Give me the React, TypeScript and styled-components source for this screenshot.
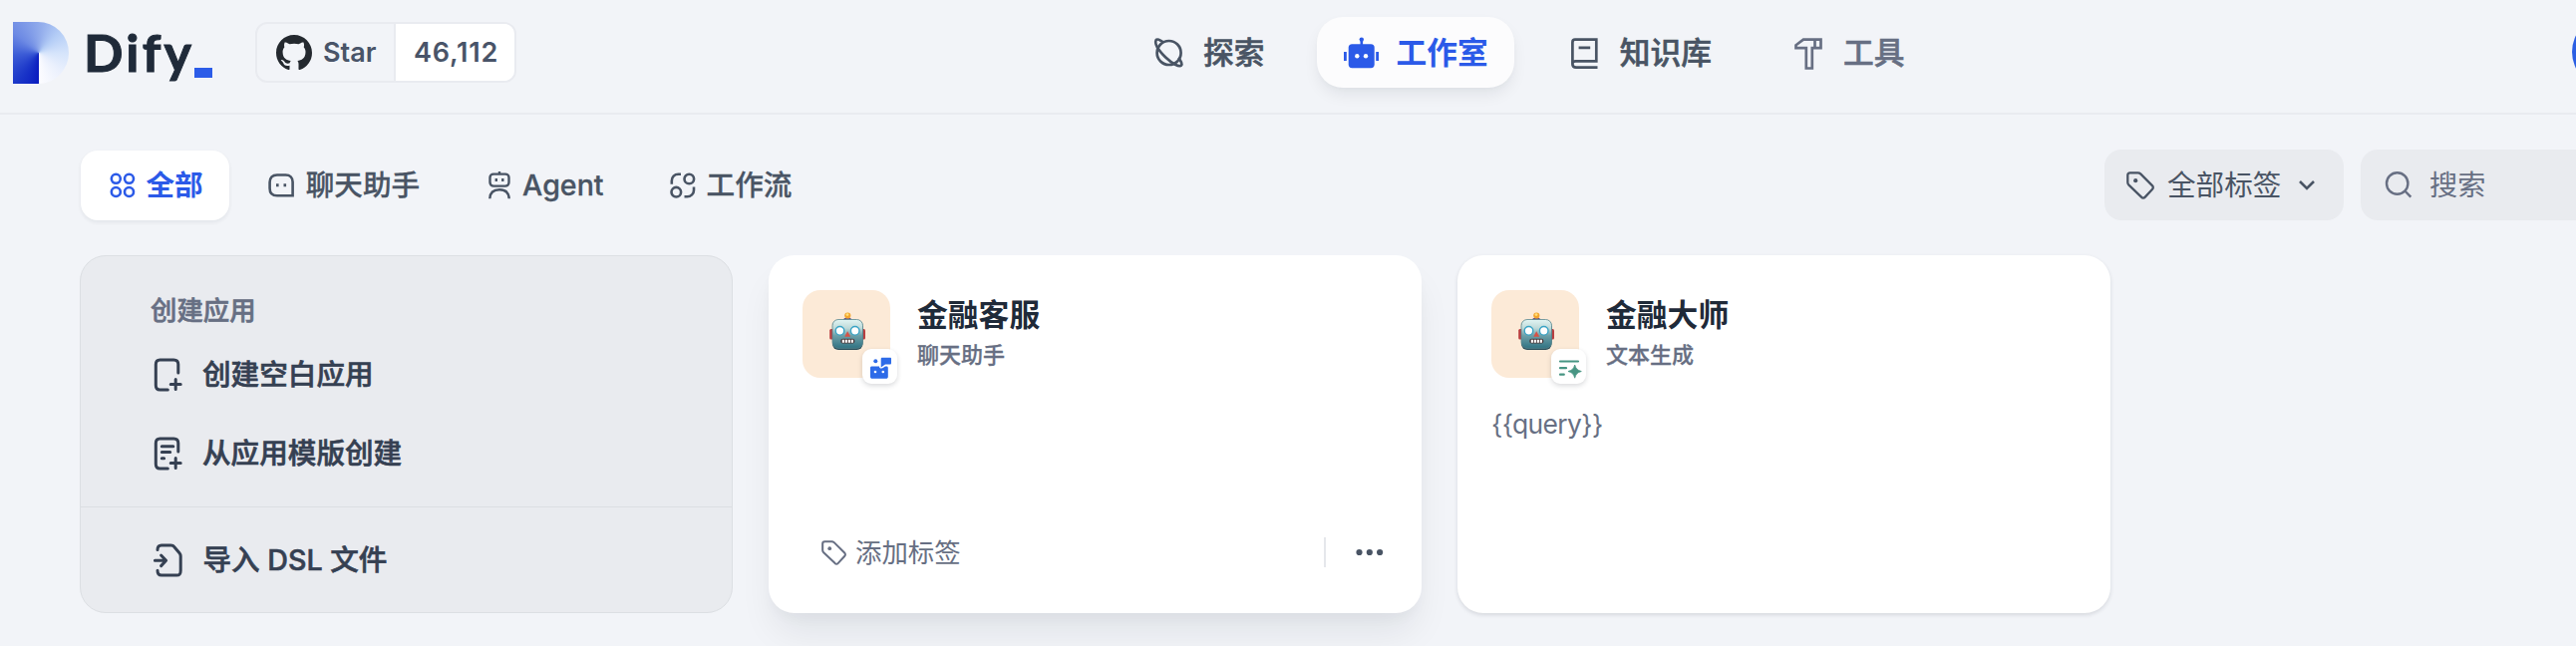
import React from "react";
import styled, { createGlobalStyle, css } from "styled-components";

const GlobalStyle = createGlobalStyle`
  *, *::before, *::after { box-sizing: border-box; }
  html, body { margin: 0; padding: 0; }
  body {
    width: 2584px;
    height: 648px;
    overflow: hidden;
    background: #f2f4f8;
    font-family: Inter, "Noto Sans CJK SC", sans-serif;
    color: #495464;
  }
  svg { display: block; flex: none; overflow: visible; }
`;

const Page = styled.div`
  width: 2584px;
  height: 648px;
  overflow: hidden;
  background: #f2f4f8;
`;

/* A hairline stroke that thickens regular CJK glyphs to a medium weight. */
const medium = css`
  font-weight: 500;
  -webkit-text-stroke: 0.6px currentColor;
`;

/* ---------- header ---------- */

const Header = styled.header`
  display: flex;
  align-items: flex-start;
  height: 115px;
  padding-left: 13px;
  border-bottom: 2px solid #e9ebf0;
`;

const Brand = styled.div`
  display: flex;
  align-items: flex-start;
  flex: none;
  width: 243px;
  padding-top: 22px;
`;

const LogoMark = styled.div`
  flex: none;
  width: 56px;
  height: 62px;
  border-radius: 0 31px 31px 0;
  background: conic-gradient(
    from 180deg at 26px 31px,
    #0a1cc0 0deg,
    #1a35c8 35deg,
    #3c5cd6 85deg,
    #6d8ae4 130deg,
    #93adec 185deg,
    #b4cdf6 225deg,
    #d5e4fb 270deg,
    #eaf0fd 310deg,
    #fcfcff 359deg,
    #0a1cc0 360deg
  );
`;

const LogoText = styled.div`
  width: 108px;
  margin-left: 15px;
  font-family: Lato, sans-serif;
  font-size: 52px;
  line-height: 60px;
  font-weight: 700;
  letter-spacing: 3.2px;
  -webkit-text-stroke: 1px #1f2a39;
  color: #1f2a39;
`;

const LogoCursor = styled.div`
  width: 18px;
  height: 10px;
  margin: 46px 0 0 3px;
  background: #2c5ce8;
`;

const StarBox = styled.div`
  display: flex;
  flex: none;
  width: 262px;
  height: 61px;
  margin-top: 22px;
  border: 2px solid #e9ebf0;
  border-radius: 12px;
  overflow: hidden;
  font-size: 27px;
  line-height: 57px;
  font-weight: 600;
  color: #495468;
`;

const StarLabel = styled.div`
  display: flex;
  align-items: center;
  gap: 11px;
  width: 139px;
  padding-left: 19px;
  border-right: 2px solid #e9ebf0;
  color: #495468;
`;

const StarCount = styled.div`
  flex: 1;
  padding-left: 18px;
  letter-spacing: 0.8px;
  background: #fff;
`;

const Nav = styled.nav`
  display: flex;
  gap: 26.2px;
  margin: 17px 0 0 609.5px;
`;

const NavItem = styled.div<{ $active?: boolean; $muted?: boolean }>`
  display: flex;
  align-items: center;
  flex: none;
  gap: 17.5px;
  height: 71px;
  padding: 0 26.5px 0 27px;
  border-radius: 26px;
  font-size: 30.7px;
  line-height: 44px;
  ${medium}
  white-space: nowrap;
  color: ${(p) => (p.$active ? "#2b5ae8" : p.$muted ? "#676f83" : "#495464")};
  ${(p) =>
    p.$active &&
    css`
      font-weight: 700;
      -webkit-text-stroke: 0;
      background: #fcfcfd;
      box-shadow: 0 8px 16px -2px rgba(16, 24, 40, 0.08), 0 3px 6px -2px rgba(16, 24, 40, 0.03);
    `}
`;

const Avatar = styled.div`
  flex: none;
  width: 72px;
  height: 72px;
  margin: 16px 0 0 643px;
  border-radius: 50%;
  background: #2b5fe3;
`;

/* ---------- toolbar ---------- */

const Toolbar = styled.div`
  display: flex;
  align-items: center;
  height: 71px;
  margin: 35px 0 0 80.5px;
`;

const Tabs = styled.div`
  display: flex;
  gap: 10px;
  width: 2030.5px;
  flex: none;
`;

const Tab = styled.div<{ $active?: boolean }>`
  display: flex;
  align-items: center;
  gap: 11px;
  height: 70px;
  padding: 0 26px 0 28px;
  border-radius: 17px;
  font-size: 28.6px;
  line-height: 40px;
  font-weight: 500;
  -webkit-text-stroke: 0.3px currentColor;
  white-space: nowrap;
  color: #495464;
  ${(p) =>
    p.$active &&
    css`
      gap: 10px;
      font-weight: 700;
      -webkit-text-stroke: 0;
      color: #2b5ae8;
      background: #fff;
      box-shadow: 0 2px 4px rgba(16, 24, 40, 0.07);
    `}
`;

const Field = styled.div<{ $width: number; $muted?: boolean }>`
  display: flex;
  align-items: center;
  flex: none;
  width: ${(p) => p.$width}px;
  height: 71px;
  margin-right: 17px;
  padding-left: ${(p) => (p.$muted ? 25 : 22)}px;
  gap: ${(p) => (p.$muted ? 18 : 13)}px;
  border-radius: 17px;
  background: #e9ebef;
  font-size: ${(p) => (p.$muted ? 28.2 : 28.6)}px;
  line-height: 40px;
  white-space: nowrap;
  color: ${(p) => (p.$muted ? "#676f83" : "#495464")};
`;

const Chevron = styled.svg`
  margin-left: 5px;
`;

/* ---------- cards ---------- */

const Cards = styled.main`
  display: flex;
  gap: 36px;
  margin: 35px 0 0 80px;
`;

const CreateCard = styled.section`
  flex: none;
  width: 655px;
  height: 359px;
  border: 1px solid #dcdfe3;
  border-radius: 26px;
  background: #e9ebef;
`;

const CreateTop = styled.div`
  height: 252px;
  padding: 34px 0 0 70px;
  border-bottom: 1px solid #dcdfe3;
`;

const CreateTitle = styled.div`
  height: 40px;
  font-size: 26.4px;
  line-height: 40px;
  ${medium}
  color: #676f83;
`;

const CreateItem = styled.div`
  display: flex;
  align-items: center;
  gap: 20px;
  height: 79px;
  font-size: 28.6px;
  line-height: 40px;
  ${medium}
  color: #354052;
`;

const CreateItems = styled.div`
  margin-top: 5px;
`;

const CreateBottom = styled.div`
  padding: 13px 0 0 70.5px;
`;

const AppCard = styled.section<{ $raised?: boolean }>`
  display: flex;
  flex-direction: column;
  flex: none;
  width: 655px;
  height: 359px;
  padding: 35px 34px 0;
  border-radius: 26px;
  background: #fff;
  box-shadow: ${(p) =>
    p.$raised
      ? "0 24px 36px -6px rgba(16, 24, 40, 0.08), 0 8px 14px -4px rgba(16, 24, 40, 0.04)"
      : "0 2px 4px rgba(16, 24, 40, 0.12)"};
`;

const AppHead = styled.div`
  display: flex;
  height: 88px;
`;

const AppIcon = styled.div`
  position: relative;
  display: flex;
  flex: none;
  justify-content: center;
  width: 88px;
  height: 88px;
  padding: 22px 0 0 2px;
  border-radius: 18px;
  background: #fcead7;
`;

const Badge = styled.div`
  position: absolute;
  right: -7px;
  bottom: -6px;
  display: flex;
  align-items: center;
  justify-content: center;
  width: 35px;
  height: 35px;
  border-radius: 9px;
  background: #fff;
  box-shadow: 0 2px 5px rgba(16, 24, 40, 0.16);
`;

const AppTitles = styled.div`
  padding: 5px 0 0 27px;
`;

const AppName = styled.div`
  height: 42px;
  font-size: 30.8px;
  line-height: 40px;
  font-weight: 700;
  color: #1f2a39;
`;

const AppKind = styled.div`
  font-size: 22px;
  line-height: 36px;
  font-weight: 500;
  -webkit-text-stroke: 0.3px currentColor;
  color: #676f83;
`;

const AppDescription = styled.div`
  margin-top: 26px;
  font-size: 26.4px;
  line-height: 40px;
  letter-spacing: -0.6px;
  color: #676f83;
`;

const AppFooter = styled.div`
  display: flex;
  align-items: center;
  height: 40px;
  margin-top: 155px;
  padding-left: 19px;
`;

const AddTag = styled.div`
  display: flex;
  align-items: center;
  gap: 9px;
  width: 504px;
  font-size: 26.4px;
  line-height: 40px;
  color: #676f83;
`;

const Separator = styled.div`
  width: 2px;
  height: 30px;
  margin-right: 30px;
  background: #e5e7eb;
`;

/* ---------- icons ---------- */

const line = {
  fill: "none",
  stroke: "currentColor",
  strokeWidth: 2.6,
} as const;

const GithubIcon = () => (
  <svg width="36" height="36" viewBox="0 0 16 16" fill="#24292f">
    <path d="M8 0C3.58 0 0 3.58 0 8c0 3.54 2.29 6.53 5.47 7.59.4.07.55-.17.55-.38 0-.19-.01-.82-.01-1.49-2.01.37-2.53-.49-2.69-.94-.09-.23-.48-.94-.82-1.13-.28-.15-.68-.52-.01-.53.63-.01 1.08.58 1.23.82.72 1.21 1.87.87 2.33.66.07-.52.28-.87.51-1.07-1.78-.2-3.64-.89-3.64-3.95 0-.87.31-1.59.82-2.15-.08-.2-.36-1.02.08-2.12 0 0 .67-.21 2.2.82.64-.18 1.32-.27 2-.27.68 0 1.36.09 2 .27 1.53-1.04 2.2-.82 2.2-.82.44 1.1.16 1.92.08 2.12.51.56.82 1.27.82 2.15 0 3.07-1.87 3.75-3.65 3.95.29.25.54.73.54 1.48 0 1.07-.01 1.93-.01 2.2 0 .21.15.46.55.38A8.013 8.013 0 0016 8c0-4.42-3.58-8-8-8z" />
  </svg>
);

const PlanetIcon = () => (
  <svg width="35" height="34" viewBox="0 0 35 34" {...line} strokeWidth={2.7}>
    <circle cx="17.6" cy="17" r="12" />
    <path d="M12 6.6C8.5 3.4 5.5 2.8 4.6 4.3C3 8 7.5 15 14.5 21.8C21 28 28 31.5 30 29.5C31 28.3 29.9 25 27 22" />
  </svg>
);

const RobotIcon = () => (
  <svg width="35" height="34" viewBox="0 0 35 34" fill="currentColor">
    <rect x="4.7" y="8.2" width="26" height="24" rx="3.6" />
    <rect x="16.5" y="3" width="2.6" height="7" />
    <circle cx="17.8" cy="3.6" r="2.2" />
    <rect x="0" y="16" width="2.8" height="9" />
    <rect x="32.2" y="16" width="2.8" height="9" />
    <circle cx="13.3" cy="20.2" r="2.2" fill="#fcfcfd" />
    <circle cx="22" cy="20.2" r="2.2" fill="#fcfcfd" />
  </svg>
);

const BookIcon = () => (
  <svg width="35" height="34" viewBox="0 0 35 34" {...line} strokeWidth={2.7}>
    <path d="M30.5 31.6H9C6.8 31.6 5.4 30.2 5.4 28.2V6.5C5.4 4.5 6.4 3.7 8 3.7H29.3V25.3H8.5C6.6 25.3 5.4 26.5 5.4 28.2M11.6 11.8H23.2" />
  </svg>
);

const HammerIcon = () => (
  <svg width="35" height="34" viewBox="0 0 35 34" {...line} strokeWidth={2.7}>
    <path d="M12 3.6H29.5V12.2H20.8V32.5H14.8V12.2H4.5V9.3L12 3.6ZM23.5 3.6V12.2" />
  </svg>
);

const GridIcon = () => (
  <svg width="28" height="28" viewBox="0 0 28 28" {...line}>
    <circle cx="7.3" cy="7.3" r="4.5" />
    <circle cx="20.5" cy="7.3" r="4.5" />
    <circle cx="7.3" cy="20.5" r="4.5" />
    <circle cx="20.5" cy="20.5" r="4.5" />
  </svg>
);

const ChatIcon = () => (
  <svg width="28" height="28" viewBox="0 0 28 28" {...line}>
    <path d="M10 3.5H18.5C22.9 3.5 25.6 6.2 25.6 10.6V24.3H10C5.2 24.3 2.6 21.6 2.6 17V10.8C2.6 6.2 5.3 3.5 10 3.5Z" />
    <path d="M10.3 12.3V15.3M17.8 12.3V15.3" />
  </svg>
);

const AgentIcon = () => (
  <svg width="28" height="28" viewBox="-1.5 0 28 28" {...line} strokeWidth={2.4}>
    <path d="M14.5 0V3" />
    <rect x="5" y="2.6" width="19" height="12" rx="3.5" />
    <path d="M4.8 27.2C5.1 21.5 8.6 18.3 14.5 18.3S23.9 21.5 24.2 27.2" />
    <path d="M11.3 7V10M17.8 7V10" />
  </svg>
);

const FlowIcon = () => (
  <svg width="28" height="28" viewBox="-1 0 28 28" {...line}>
    <circle cx="20.3" cy="7.5" r="4.8" />
    <circle cx="7.3" cy="20.7" r="4.8" />
    <path d="M2.8 12.8V9.5C2.8 5.5 5.5 2.8 9.5 2.8H12M25 15.5V18.7C25 22.5 22 25.3 18.3 25.3H15.5" />
  </svg>
);

const TagIcon = ({ size = 28 }: { size?: number }) => (
  <svg width={size} height={size} viewBox="0 0 28 28" {...line} strokeWidth={2.3}>
    <path
      strokeLinejoin="round"
      d="M3.8 1.3H11.5C12.6 1.3 13.4 1.6 14.2 2.4L25.9 14.1C27.1 15.3 27.1 16.8 25.9 18L18.8 25.6C17.6 26.9 16.2 26.9 15 25.6L2.5 13.7C1.7 12.9 1.3 12.1 1.3 11V3.8C1.3 2.2 2.2 1.3 3.8 1.3Z"
    />
    <circle cx="9.2" cy="9.2" r="2.1" fill="currentColor" stroke="none" />
  </svg>
);

const ChevronIcon = () => (
  <Chevron width="16" height="10" viewBox="0 0 16 10" {...line}>
    <path d="M1 1L8 8L15 1" />
  </Chevron>
);

const SearchIcon = () => (
  <svg width="26" height="27" viewBox="0 0 26 27" {...line} strokeWidth={2.4}>
    <circle cx="11.7" cy="12" r="10.7" />
    <path d="M19.3 19.5L25.3 25.7" />
  </svg>
);

const thick = { ...line, strokeWidth: 3, strokeLinecap: "round", strokeLinejoin: "round" } as const;

const BlankFileIcon = () => (
  <svg width="32" height="34" viewBox="-1 0 32 34" {...thick}>
    <path d="M26.8 15V6.5C26.8 3.5 25.3 2 22.3 2H8.5C5.3 2 4.3 3.5 4.3 6.5V27.5C4.3 30.5 5.5 32 8.5 32H16.3M24.2 21.5V31.5M19.2 26.5H29.2" />
  </svg>
);

const TemplateFileIcon = () => (
  <svg width="32" height="34" viewBox="-1 0 32 34" {...thick}>
    <path d="M26.8 15V6.5C26.8 3.5 25.3 2 22.3 2H8.5C5.3 2 4.3 3.5 4.3 6.5V27.5C4.3 30.5 5.5 32 8.5 32H16.3M24.2 21.5V31.5M19.2 26.5H29.2" />
    <path d="M10.3 9.7H21.8M10.3 15.6H18.7M10.3 21.7H12.6" />
  </svg>
);

const ImportIcon = () => (
  <svg width="32" height="34" viewBox="0 0 32 34" {...thick}>
    <path d="M6 6.5C6 3.5 7 2 10 2H19.5C21 2 22 2.5 22.9 3.7L28 9.7C28.9 10.8 29.2 11.5 29.2 13V27.5C29.2 30.5 28.5 32 25.3 32H10C7 32 6 30.5 6 27.2M3.4 17.3H14M9.6 12L14.6 17.3L9.6 22.6" />
  </svg>
);

const RobotFace = () => (
  <svg width="38" height="40" viewBox="0 0 38 40">
    <defs>
      <linearGradient id="face" x1="0" y1="0" x2="0" y2="1">
        <stop offset="0" stopColor="#e2f5f3" />
        <stop offset="0.3" stopColor="#bfdad9" />
        <stop offset="0.55" stopColor="#6fa0a8" />
        <stop offset="1" stopColor="#2f7383" />
      </linearGradient>
    </defs>
    <path d="M15 8.5C15 6.3 16.5 5.5 19 5.5S23.5 6.3 23.5 8.5Z" fill="#5d4a86" />
    <circle cx="19.3" cy="3.5" r="3.1" fill="#f3a52f" />
    <circle cx="19" cy="2.6" r="1.4" fill="#ffe07a" />
    <rect x="1.2" y="17" width="4.5" height="10.5" rx="1.5" fill="#b83e40" />
    <rect x="32.5" y="17" width="4.5" height="10.5" rx="1.5" fill="#b83e40" />
    <rect x="4" y="8" width="30.5" height="30" rx="6" fill="#2a4f5c" />
    <rect x="4" y="7.5" width="30.5" height="28.8" rx="6" fill="url(#face)" stroke="#58868e" strokeWidth="0.8" />
    <circle cx="11.5" cy="18.8" r="4.3" fill="#fff" stroke="#3aa3c5" strokeWidth="1.4" />
    <circle cx="26.7" cy="18.8" r="4.3" fill="#fff" stroke="#3aa3c5" strokeWidth="1.4" />
    <path d="M19.2 19.2L22.2 24.7H16.2Z" fill="#d75146" />
    <rect x="12.3" y="26.8" width="14" height="4.8" rx="2" fill="#4a3a3c" />
    <path d="M13.8 29.2H25" stroke="#fff" strokeWidth="3" strokeDasharray="2.1 0.9" />
  </svg>
);

const ChatBadgeIcon = () => (
  <svg width="35" height="35" viewBox="0 0 35 35" fill="#2d6be8">
    <circle cx="13.3" cy="12.3" r="2" />
    <path d="M20 8.8H28C28.7 8.8 29 9.2 29 9.8V14C29 15 28.5 15.5 27.7 15.5H23L18.7 18.5V10.2C18.7 9.3 19.2 8.8 20 8.8Z" />
    <path d="M9.5 17.5H17C17 19.8 19.5 20.3 21.5 18.5L23 17.5H24.5C25.3 17.5 25.8 18.2 25.8 19V27.7C25.8 29 25 29.8 23.7 29.8H10C8.7 29.8 8 29 8 27.7V19C8 18 8.6 17.5 9.5 17.5Z" />
    <circle cx="13" cy="23" r="1.3" fill="#fff" />
    <circle cx="20.8" cy="23" r="1.3" fill="#fff" />
  </svg>
);

const TextBadgeIcon = () => (
  <svg width="35" height="35" viewBox="0 0 35 35" fill="#479583">
    <path d="M9 12.5H27M9 19.2H15M9 25.7H12.8" stroke="#479583" strokeWidth="2.2" strokeLinecap="round" />
    <path
      d="M23.7 16C24.9 20 26.2 21.3 30.3 22.5C26.2 23.7 24.9 25 23.7 29.2C22.5 25 21.2 23.7 17 22.5C21.2 21.3 22.5 20 23.7 16Z"
      stroke="#479583"
      strokeWidth="0.8"
    />
  </svg>
);

const DotsIcon = () => (
  <svg width="28" height="8" viewBox="0 0 28 8" fill="#495464">
    <circle cx="3.5" cy="4" r="3.1" />
    <circle cx="13.8" cy="4" r="3.1" />
    <circle cx="24.1" cy="4" r="3.1" />
  </svg>
);

const tabs = [
  { label: "全部", icon: <GridIcon />, active: true },
  { label: "聊天助手", icon: <ChatIcon /> },
  { label: "Agent", icon: <AgentIcon /> },
  { label: "工作流", icon: <FlowIcon /> },
];

export default function App() {
  return (
    <>
      <GlobalStyle />
      <Page>
        <Header>
          <Brand>
            <LogoMark />
            <LogoText>Dify</LogoText>
            <LogoCursor />
          </Brand>
          <StarBox>
            <StarLabel>
              <GithubIcon />
              Star
            </StarLabel>
            <StarCount>46,112</StarCount>
          </StarBox>
          <Nav>
            <NavItem><PlanetIcon />探索</NavItem>
            <NavItem $active><RobotIcon />工作室</NavItem>
            <NavItem><BookIcon />知识库</NavItem>
            <NavItem $muted><HammerIcon />工具</NavItem>
          </Nav>
          <Avatar />
        </Header>

        <Toolbar>
          <Tabs>
            {tabs.map((tab) => (
              <Tab key={tab.label} $active={tab.active}>
                {tab.icon}
                {tab.label}
              </Tab>
            ))}
          </Tabs>
          <Field $width={240}>
            <TagIcon />
            全部标签
            <ChevronIcon />
          </Field>
          <Field $width={400} $muted>
            <SearchIcon />
            搜索
          </Field>
        </Toolbar>

        <Cards>
          <CreateCard>
            <CreateTop>
              <CreateTitle>创建应用</CreateTitle>
              <CreateItems>
                <CreateItem><BlankFileIcon />创建空白应用</CreateItem>
                <CreateItem><TemplateFileIcon />从应用模版创建</CreateItem>
              </CreateItems>
            </CreateTop>
            <CreateBottom>
              <CreateItem><ImportIcon />导入 DSL 文件</CreateItem>
            </CreateBottom>
          </CreateCard>

          <AppCard $raised>
            <AppHead>
              <AppIcon>
                <RobotFace />
                <Badge><ChatBadgeIcon /></Badge>
              </AppIcon>
              <AppTitles>
                <AppName>金融客服</AppName>
                <AppKind>聊天助手</AppKind>
              </AppTitles>
            </AppHead>
            <AppFooter>
              <AddTag><TagIcon size={25} />添加标签</AddTag>
              <Separator />
              <DotsIcon />
            </AppFooter>
          </AppCard>

          <AppCard>
            <AppHead>
              <AppIcon>
                <RobotFace />
                <Badge><TextBadgeIcon /></Badge>
              </AppIcon>
              <AppTitles>
                <AppName>金融大师</AppName>
                <AppKind>文本生成</AppKind>
              </AppTitles>
            </AppHead>
            <AppDescription>{"{{query}}"}</AppDescription>
          </AppCard>
        </Cards>
      </Page>
    </>
  );
}
